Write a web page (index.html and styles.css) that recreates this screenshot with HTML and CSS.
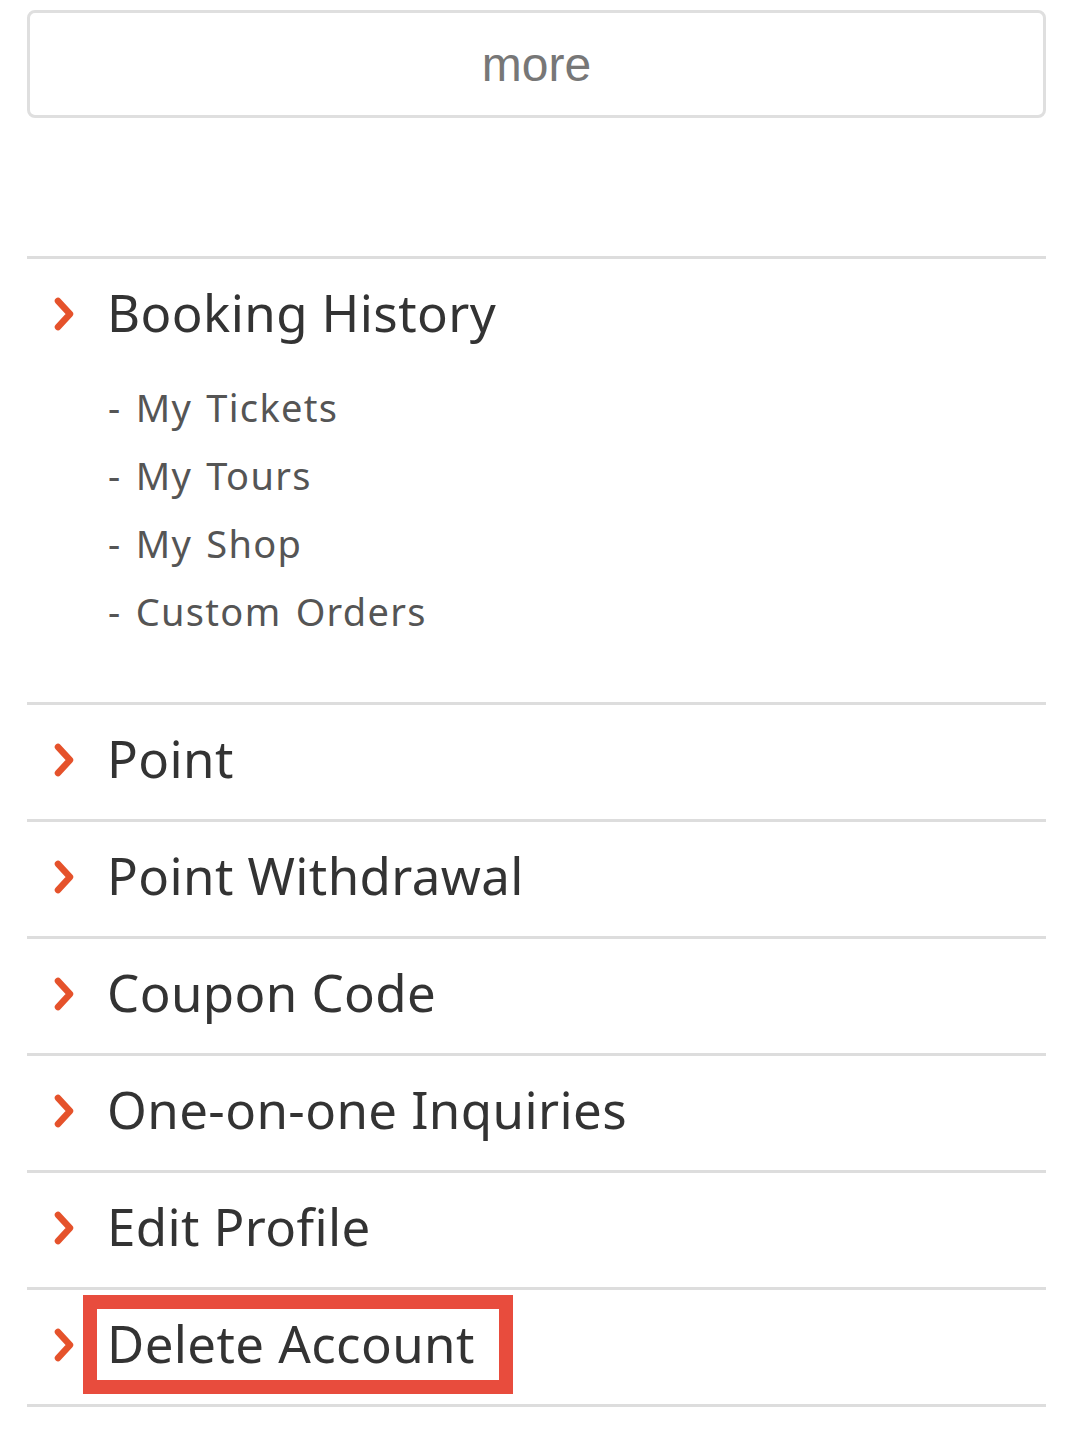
FILE: index.html
```html
<!DOCTYPE html>
<html lang="en">
<head>
<meta charset="utf-8">
<title>My Page</title>
<link rel="stylesheet" href="styles.css">
</head>
<body>
<div class="page">
  <button class="more-btn" type="button">more</button>

  <ul class="menu">
    <li class="menu-item menu-item--group">
      <a class="menu-link" href="#">
        <svg class="chev" viewBox="0 0 24 36" aria-hidden="true"><path d="M6 5 L18 18 L6 31" /></svg>
        <span class="menu-label">Booking History</span>
      </a>
      <ul class="submenu">
        <li>- My Tickets</li>
        <li>- My Tours</li>
        <li>- My Shop</li>
        <li>- Custom Orders</li>
      </ul>
    </li>
    <li class="menu-item">
      <a class="menu-link" href="#">
        <svg class="chev" viewBox="0 0 24 36" aria-hidden="true"><path d="M6 5 L18 18 L6 31" /></svg>
        <span class="menu-label">Point</span>
      </a>
    </li>
    <li class="menu-item">
      <a class="menu-link" href="#">
        <svg class="chev" viewBox="0 0 24 36" aria-hidden="true"><path d="M6 5 L18 18 L6 31" /></svg>
        <span class="menu-label">Point Withdrawal</span>
      </a>
    </li>
    <li class="menu-item">
      <a class="menu-link" href="#">
        <svg class="chev" viewBox="0 0 24 36" aria-hidden="true"><path d="M6 5 L18 18 L6 31" /></svg>
        <span class="menu-label">Coupon Code</span>
      </a>
    </li>
    <li class="menu-item">
      <a class="menu-link" href="#">
        <svg class="chev" viewBox="0 0 24 36" aria-hidden="true"><path d="M6 5 L18 18 L6 31" /></svg>
        <span class="menu-label">One-on-one Inquiries</span>
      </a>
    </li>
    <li class="menu-item">
      <a class="menu-link" href="#">
        <svg class="chev" viewBox="0 0 24 36" aria-hidden="true"><path d="M6 5 L18 18 L6 31" /></svg>
        <span class="menu-label">Edit Profile</span>
      </a>
    </li>
    <li class="menu-item">
      <a class="menu-link" href="#">
        <svg class="chev" viewBox="0 0 24 36" aria-hidden="true"><path d="M6 5 L18 18 L6 31" /></svg>
        <span class="menu-label menu-label--marked">Delete Account<span class="highlight-box"></span></span>
      </a>
    </li>
  </ul>
</div>
</body>
</html>
```

FILE: styles.css
```css
* {
  box-sizing: border-box;
}

html, body {
  margin: 0;
  padding: 0;
  background: #ffffff;
}

body {
  font-family: "Noto Sans", "Liberation Sans", sans-serif;
  color: #333333;
}

.page {
  padding: 10px 27px 0;
}

.more-btn {
  display: block;
  width: 100%;
  height: 108px;
  margin: 0;
  padding: 0;
  background: #ffffff;
  border: 3px solid #dfdfdf;
  border-radius: 8px;
  font-family: "Liberation Sans", Arial, sans-serif;
  font-size: 48px;
  color: #777777;
  cursor: pointer;
}

.menu {
  list-style: none;
  margin: 138px 0 0;
  padding: 0;
  border-bottom: 3px solid #dddddd;
}

.menu-item {
  border-top: 3px solid #dddddd;
  height: 117px;
  padding-bottom: 8px;
  display: flex;
  flex-direction: column;
  justify-content: center;
}

.menu-item--group {
  height: auto;
  padding: 23px 0 57px;
}

.menu-link {
  display: flex;
  align-items: center;
  height: 60px;
  padding-left: 25px;
  text-decoration: none;
  color: #333333;
}

.chev {
  width: 24px;
  height: 36px;
  flex: none;
  margin-right: 31px;
  position: relative;
  top: 2px;
}

.chev path {
  fill: none;
  stroke: #e5522b;
  stroke-width: 6.5;
  stroke-linecap: round;
  stroke-linejoin: round;
}

.menu-label {
  font-size: 51px;
  line-height: 60px;
  letter-spacing: 0.4px;
  white-space: nowrap;
}

.menu-label--marked {
  position: relative;
}

.highlight-box {
  position: absolute;
  left: -24px;
  top: -18px;
  width: 430px;
  height: 99px;
  border: 14px solid #e84c3d;
  pointer-events: none;
}

.submenu {
  list-style: none;
  margin: 31px 0 0;
  padding: 0 0 0 81px;
  color: #555555;
  font-size: 38px;
  line-height: 68px;
  letter-spacing: 1.3px;
  word-spacing: 3px;
}
```
